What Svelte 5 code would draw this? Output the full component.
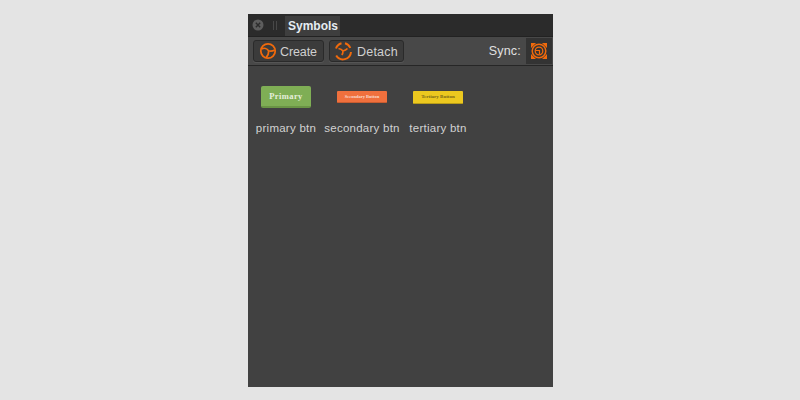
<script>
  const symbols = [
    { label: 'Primary', caption: 'primary btn', kind: 'primary' },
    { label: 'Secondary Button', caption: 'secondary btn', kind: 'secondary' },
    { label: 'Tertiary Button', caption: 'tertiary btn', kind: 'tertiary' }
  ];
</script>

<div class="page">
  <div class="panel">
    <div class="tabbar">
      <span class="close"><svg width="12" height="12" viewBox="0 0 12 12"><circle cx="6" cy="6" r="5.5" fill="#5d5d5d"/><path d="M3.8 3.8l4.4 4.4M8.2 3.8l-4.4 4.4" stroke="#2c2c2c" stroke-width="1.4"/></svg></span>
      <span class="grip"></span>
      <span class="tab">Symbols</span>
    </div>
    <div class="toolbar">
      <button class="tool create">
        <svg class="ico" width="18" height="18" viewBox="0 0 18 18" fill="none" stroke="#f06a0c">
          <circle cx="9" cy="9" r="7.2" stroke-width="1.8"/>
          <path d="M2.5 7C5 5.6 8 6.4 9.6 8.8M15.6 8C13.6 9.2 11.4 9.4 9.6 8.8M9.6 8.8C9.8 11.5 8.8 14 6.8 15.8" stroke-width="1.6"/>
        </svg>
        <span>Create</span>
      </button>
      <button class="tool detach">
        <svg class="ico" width="20" height="20" viewBox="0 0 20 20" fill="none" stroke="#f06a0c" stroke-width="2">
          <path d="M3 7.5A8 8 0 0 1 8.5 2.2M12 2.2A8 8 0 0 1 17.3 7M18 11A8 8 0 0 1 3.2 14.5"/>
          <path d="M5.5 7.5C7.5 7.8 9 8.6 10 10M14.5 7.5C13 9 11.5 9.6 10 10M10 10C10 11.5 9.6 13 8.8 14" stroke-width="1.7"/>
        </svg>
        <span>Detach</span>
      </button>
      <span class="sync">Sync:</span>
      <span class="syncbox">
        <svg class="ico" width="18" height="18" viewBox="0 0 18 18" fill="none" stroke="#f06a0c">
          <path d="M1 1h5L1 6zM17 1v5l-5-5zM1 17v-5l5 5zM17 17h-5l5-5z" fill="#f06a0c" stroke="none"/>
          <circle cx="9" cy="9" r="6.8" stroke-width="1.5"/>
          <circle cx="9" cy="9" r="3.8" stroke-width="1.3"/>
          <path d="M5.5 8.5H9.5V12" stroke-width="1.2"/>
        </svg>
      </span>
    </div>
    <div class="grid">
      {#each symbols as s}
        <div class="symbol">
          <div class="stage"><span class="btn {s.kind}">{s.label}</span></div>
          <div class="caption">{s.caption}</div>
        </div>
      {/each}
    </div>
  </div>
</div>

<style>
  :global(body) { margin: 0; background: #e4e4e4; }
  .page { width: 800px; height: 400px; display: flex; justify-content: center; padding-top: 14px; box-sizing: border-box; }
  .panel { width: 305px; height: 373px; background: #414141; display: flex; flex-direction: column; font-family: "Liberation Sans", Arial, sans-serif; margin-left: 1px; }
  .tabbar { height: 22px; background: #2b2b2b; display: flex; align-items: flex-end; flex: none; }
  .close { width: 12px; height: 12px; margin: 0 0 5px 4px; display: flex; }
  .grip { width: 4px; height: 9px; margin: 0 8px 6px 9px; border-left: 1px solid #484848; border-right: 1px solid #484848; box-sizing: border-box; }
  .tab { background: #3e3e3e; color: #e6edf2; font-weight: 700; font-size: 12px; line-height: 20px; height: 20px; width: 55px; padding-left: 3px; box-sizing: border-box; white-space: nowrap; }
  .toolbar { flex: none; height: 28px; background: #484848; border-top: 1px solid #222; border-bottom: 1px solid #262626; display: flex; align-items: center; padding-left: 5px; }
  .tool { height: 22px; background: #3b3b3b; border: 1px solid #2a2a2a; border-radius: 3px; box-shadow: 0 1px 0 #555; display: flex; align-items: center; color: #d0d0d0; font: 12.5px "Liberation Sans", Arial, sans-serif; letter-spacing: 0.2px; box-sizing: border-box; }
  .ico { flex: none; }
  .tool span { padding-top: 1px; }
  .create { width: 71px; padding: 0 0 0 5px; gap: 3px; margin-right: 5px; letter-spacing: -0.1px; }
  .detach { width: 75px; padding: 0 0 0 3px; gap: 4px; }
  .sync { margin-left: auto; color: #e0e0e0; font-size: 12.5px; letter-spacing: 0.2px; margin-right: 5px; }
  .syncbox { width: 26px; height: 26px; background: #333; display: flex; align-items: center; justify-content: center; margin-right: 1px; }
  .grid { display: flex; }
  .symbol { width: 76px; display: flex; flex-direction: column; align-items: center; }
  .stage { height: 61px; display: flex; align-items: center; justify-content: center; width: 100%; padding-top: 1px; box-sizing: border-box; }
  .btn { width: 50px; box-sizing: border-box; text-align: center; font-family: "Liberation Serif", serif; font-weight: 700; white-space: nowrap; overflow: hidden; }
  .primary { height: 22px; line-height: 20px; background: #7fae55; border-bottom: 2px solid #6a9445; border-radius: 2px; color: #e6eedc; font-size: 8.5px; letter-spacing: 0.4px; }
  .secondary { height: 12px; line-height: 11px; background: #f0703d; border-bottom: 1px solid #c95c30; border-radius: 1px; color: #f8dccf; font-size: 4.5px; }
  .tertiary { height: 13px; line-height: 12px; background: #ecc81f; border-bottom: 1px solid #b89c18; border-radius: 1px; color: #7a6818; font-size: 5px; }
  .caption { color: #d2d2d2; font-size: 11.5px; margin-top: -5px; letter-spacing: 0.25px; white-space: nowrap; font-family: "Liberation Sans", Arial, sans-serif; }
</style>
